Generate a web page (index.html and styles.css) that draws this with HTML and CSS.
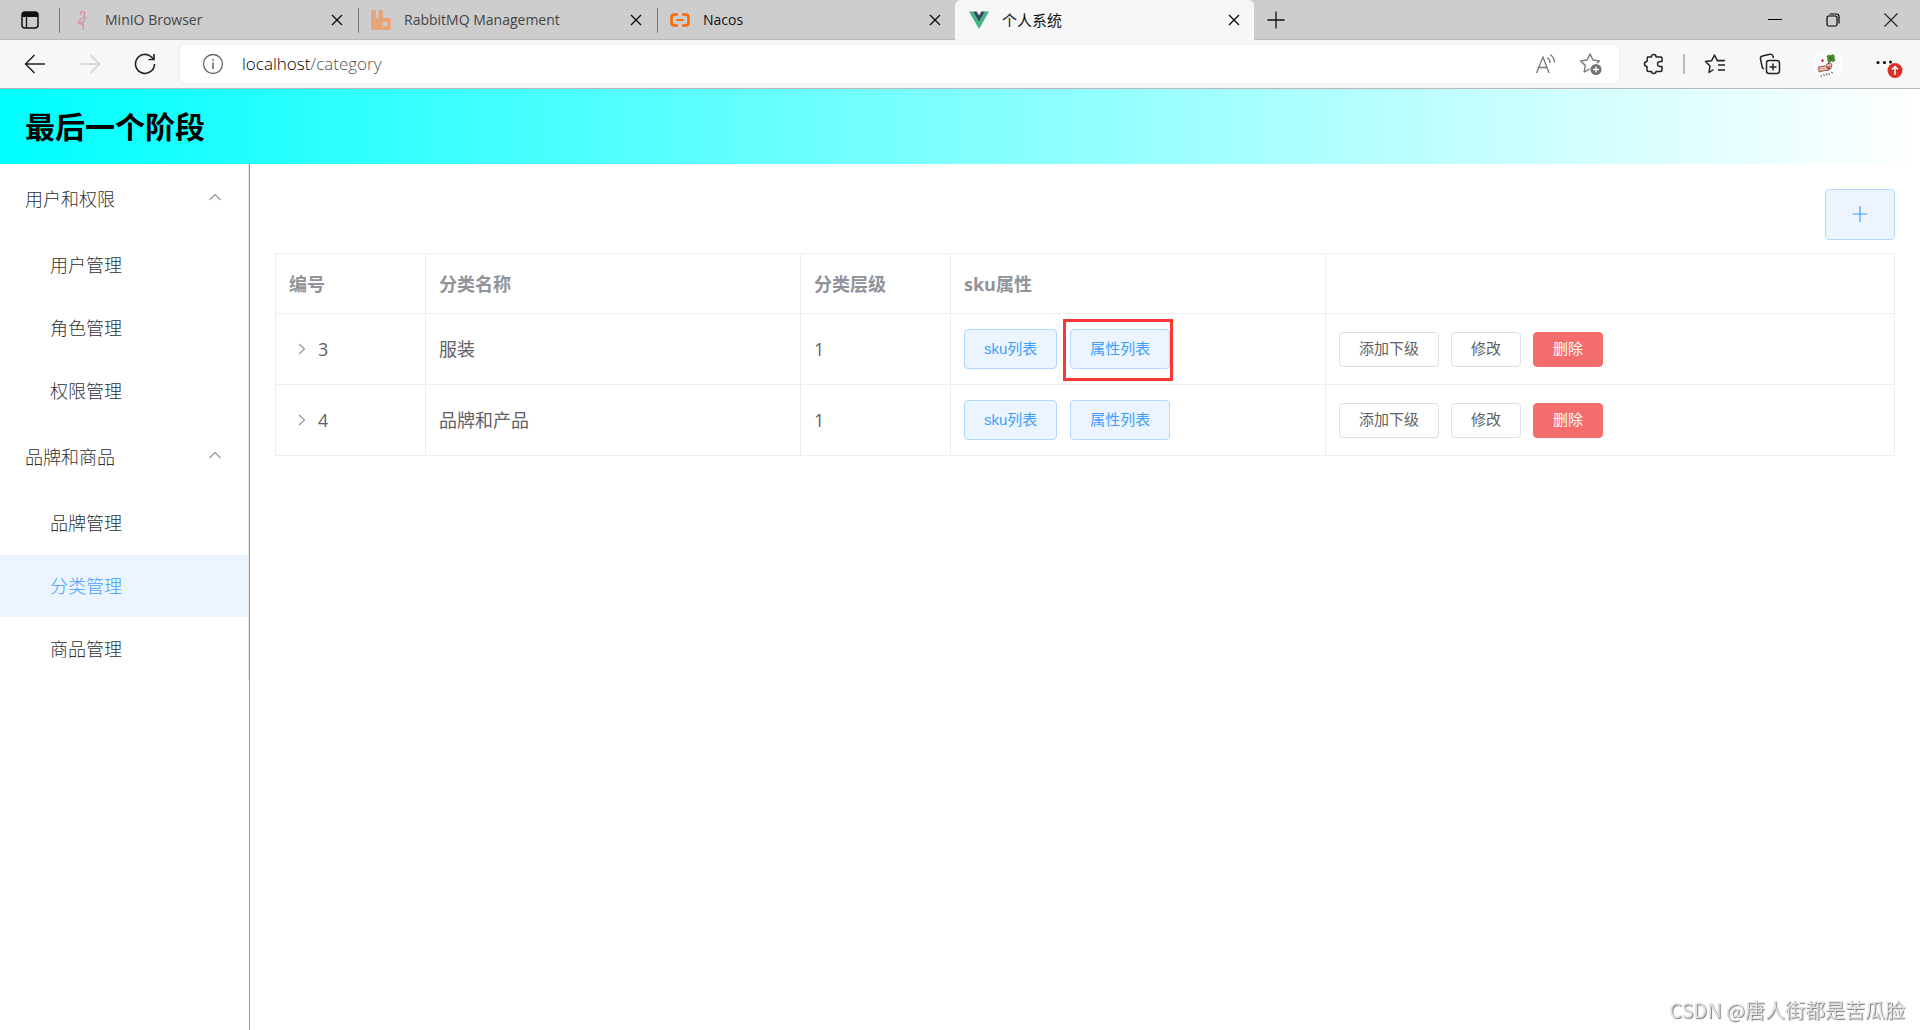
FILE: index.html
```html
<!DOCTYPE html>
<html lang="zh-CN">
<head>
<meta charset="utf-8">
<title>个人系统</title>
<link rel="stylesheet" href="styles.css">
</head>
<body>
<div class="browser">
  <div class="tabstrip">
    <button class="tab-actions" aria-label="Tab actions">
      <svg width="20" height="20" viewBox="0 0 20 20"><rect x="2" y="2" width="16" height="16" rx="3" fill="none" stroke="#111" stroke-width="1.5"/><path d="M2 7V4.500Q2 2 4.500 2h11Q18 2 18 4.500V7Z" fill="#111"/><path d="M6.500 6v12" stroke="#111" stroke-width="1.300"/></svg>
    </button>
    <div class="tab">
      <svg class="favicon" width="20" height="20" viewBox="0 0 20 20" fill="none" stroke="#d58f9b" stroke-width="1.300" stroke-linecap="round" stroke-linejoin="round"><path d="M9 4.500Q8.500 1.300 10.500 1.300Q13 1.500 12.500 4Q12 5.500 13 7.500Q13.500 10 11 12L6 13.500Q7 9.500 12.500 7M11 12v7.500M11 15l-3-1.500"/></svg>
      <span class="tab-title">MinIO Browser</span>
      <button class="tab-close" aria-label="Close tab"><svg width="12" height="12" viewBox="0 0 12 12"><path d="M1 1l10 10M11 1L1 11"/></svg></button>
    </div>
    <div class="tab">
      <svg class="favicon" width="20" height="20" viewBox="0 0 20 20"><path fill="#e6a57b" d="M1 0h3q1 0 1 1v7h2.500V1q0-1 1-1h2.500q1 0 1 1v7h7q1 0 1 1v10q0 1-1 1H1q-1 0-1-1V1q0-1 1-1z"/><rect x="12" y="12" width="4" height="4" rx="1" fill="#cdcdcd"/></svg>
      <span class="tab-title">RabbitMQ Management</span>
      <button class="tab-close" aria-label="Close tab"><svg width="12" height="12" viewBox="0 0 12 12"><path d="M1 1l10 10M11 1L1 11"/></svg></button>
    </div>
    <div class="tab">
      <svg class="favicon" width="20" height="20" viewBox="0 0 20 20" fill="none" stroke="#ff6a00" stroke-width="2.600"><path d="M8 4.500H4.500Q1.500 4.500 1.500 7.500v5q0 3 3 3H8M12 4.500h3.500q3 0 3 3v5q0 3-3 3H12"/><path d="M6.500 10h7" stroke-width="2"/></svg>
      <span class="tab-title dark">Nacos</span>
      <button class="tab-close" aria-label="Close tab"><svg width="12" height="12" viewBox="0 0 12 12"><path d="M1 1l10 10M11 1L1 11"/></svg></button>
    </div>
    <div class="tab active">
      <svg class="favicon" width="20" height="20" viewBox="0 0 20 20"><path fill="#41b883" d="M0 1.500h4L10 12l6-10.500h4L10 19z"/><path fill="#35495e" d="M4 1.500h3.700L10 5.500l2.300-4H16L10 12z"/></svg>
      <span class="tab-title dark">个人系统</span>
      <button class="tab-close" aria-label="Close tab"><svg width="12" height="12" viewBox="0 0 12 12"><path d="M1 1l10 10M11 1L1 11"/></svg></button>
    </div>
    <button class="new-tab" aria-label="New tab"><svg width="18" height="18" viewBox="0 0 18 18"><path d="M9 0.500v17M0.500 9h17" stroke="#111" stroke-width="1.300"/></svg></button>
    <div class="window-controls">
      <button aria-label="Minimize"><svg width="14" height="14" viewBox="0 0 14 14"><path d="M0 6.500h14" stroke="#000"/></svg></button>
      <button aria-label="Restore"><svg width="14" height="14" viewBox="0 0 14 14" fill="none" stroke="#000" stroke-width="1.200"><rect x="1" y="3" width="10" height="10" rx="1.500"/><path d="M3.500 1H10.500Q13 1 13 3.500V10.500"/></svg></button>
      <button aria-label="Close"><svg width="14" height="14" viewBox="0 0 14 14"><path d="M0.500 0.500l13 13M13.500 0.500l-13 13" stroke="#222" stroke-width="1.100"/></svg></button>
    </div>
  </div>
  <div class="toolbar">
    <div class="nav-buttons">
      <button aria-label="Back"><svg width="22" height="22" viewBox="0 0 22 22"><path d="M21 11H1.500M10.500 2L1.500 11l9 9" fill="none" stroke="#222" stroke-width="1.500"/></svg></button>
      <button aria-label="Forward" disabled><svg width="22" height="22" viewBox="0 0 22 22"><path d="M1 11h19.500M11.500 2l9 9-9 9" fill="none" stroke="#cfcfcf" stroke-width="1.500"/></svg></button>
      <button aria-label="Reload"><svg width="22" height="22" viewBox="0 0 22 22" fill="none" stroke="#222" stroke-width="1.600"><path d="M20.500 11A9.500 9.500 0 1 1 17.500 4L19.500 6"/><path d="M20 1v5.500h-5.500"/></svg></button>
    </div>
    <div class="address">
      <svg width="22" height="22" viewBox="0 0 22 22" fill="none" stroke="#666" stroke-width="1.300"><circle cx="11" cy="11" r="9.500"/><path d="M11 9.500v6.500M11 6v1.700" stroke-width="1.600"/></svg>
      <div class="url"><span class="host">localhost</span>/category</div>
      <button aria-label="Read aloud"><svg width="22" height="22" viewBox="0 0 22 22" fill="none" stroke="#777" stroke-width="1.300"><path d="M1.500 20L8 4l6 16M4 14.500h8M12.500 4.500q2.500 2 2.500 5.500M15 1.500q4.500 3 4.500 8"/></svg></button>
      <button aria-label="Add to favorites"><svg width="24" height="24" viewBox="0 0 24 24"><path d="M11 2l2.900 6 6.400.900-4.600 4.600 1 6.300L11 16.900 5.200 20l1.100-6.500L1.700 8.900 8.100 8z" fill="none" stroke="#777" stroke-width="1.400" stroke-linejoin="round"/><circle cx="17" cy="17.500" r="6.500" fill="#fff"/><circle cx="17" cy="17.500" r="5.500" fill="#717171"/><path d="M17 14.500v6M14 17.500h6" stroke="#fff" stroke-width="1.300"/></svg></button>
    </div>
    <div class="extras">
      <button aria-label="Extensions"><svg width="22" height="22" viewBox="0 0 22 22" fill="none" stroke="#222" stroke-width="1.500" stroke-linejoin="round"><path d="M4.500 4H8.500Q8.200 1.500 10.700 1.500T13 4H18Q19 4 19 5V8.500Q14.500 8 14.500 11T19 13.500V17Q19 18.500 17.500 18.500H13Q13 20.500 10.800 20.500T8.500 18.500H5.500Q4 18.500 4 17V13.500Q1.500 13.500 1.500 11T4 8.500Z"/></svg></button>
      <span class="divider"></span>
      <button aria-label="Favorites"><svg width="22" height="22" viewBox="0 0 22 22" fill="none" stroke="#222" stroke-width="1.500" stroke-linejoin="round"><path d="M9.500 16.500L5 19.500l1-6.500L1.500 8.500 7.700 7.700 10.500 2l2.800 5.700H20M14 12h7M14 17h7M12.500 7.500h8.500"/></svg></button>
      <button aria-label="Collections"><svg width="22" height="22" viewBox="0 0 22 22" fill="none" stroke="#222" stroke-width="1.500"><rect x="7.500" y="7.500" width="13" height="13" rx="2.500"/><path d="M14 10.500v7M10.500 14h7M5 16L3.300 14.500 1.500 6Q1 3.500 3.500 3L11 1.300Q13.500 1 14 3.300L14.500 5"/></svg></button>
      <button aria-label="Profile"><svg width="28" height="28" viewBox="0 0 28 28"><circle cx="14" cy="14" r="13.500" fill="#fafafa" stroke="#fff"/><path d="M4.500 17l6.500-1 3-2.500q3-1 4 1l-1 4q-3 3-6 2l-6 1.500z" fill="#edb4a5" stroke="#76443d" stroke-width=".8"/><path d="M12 17h4M13 19l3-1M14 14l3-6" stroke="#6a3d2c" fill="none"/><g fill="#479b20" stroke="#285f19" stroke-width=".7"><circle cx="15" cy="7" r="1.800"/><circle cx="18.500" cy="6.500" r="1.800"/><circle cx="15.500" cy="10" r="1.800"/><circle cx="19" cy="9.700" r="1.800"/></g><path d="M7 10.500l1.500-1.500 1.500 1.500-1.500 2z" fill="#c71d4d"/><path d="M7 25l.500 1.500M9 24.500l2 1M12 23.500l1 2M14 23.500l2 1M17 22l2 1" stroke="#665451" fill="none"/></svg></button>
      <button class="more" aria-label="Settings and more"><svg width="28" height="28" viewBox="0 0 28 28"><g fill="#111"><circle cx="3" cy="12.500" r="1.600"/><circle cx="9.500" cy="12.500" r="1.600"/><circle cx="15.500" cy="12" r="1.500"/></g><circle cx="20" cy="20.500" r="7.500" fill="#db3226"/><path d="M20 25v-8M17 19.500l3-3 3 3" stroke="#fff" stroke-width="1.500" fill="none"/></svg></button>
    </div>
  </div>
</div>
<header class="app-header"><h1>最后一个阶段</h1></header>
<div class="layout">
  <nav class="sidebar">
    <div class="menu">
      <button class="menu-head" aria-expanded="true">用户和权限<svg width="14" height="12" viewBox="0 0 14 12"><path d="M1.500 7L7 1.500 12.500 7"/></svg></button>
      <div class="submenu">
        <a href="#user">用户管理</a>
        <a href="#role">角色管理</a>
        <a href="#permission">权限管理</a>
      </div>
      <button class="menu-head" aria-expanded="true">品牌和商品<svg width="14" height="12" viewBox="0 0 14 12"><path d="M1.500 7L7 1.500 12.500 7"/></svg></button>
      <div class="submenu">
        <a href="#brand">品牌管理</a>
        <a class="current" href="#category">分类管理</a>
        <a href="#product">商品管理</a>
      </div>
    </div>
  </nav>
  <main class="content">
    <button class="btn primary add" aria-label="添加分类"><svg width="16" height="18" viewBox="0 0 16 18"><path d="M8 0v16M0.500 8h15" stroke="#409eff" stroke-width="1.200"/></svg></button>
    <table>
      <colgroup><col class="narrow"><col class="wide"><col class="narrow"><col class="wide"><col></colgroup>
      <thead><tr><th>编号</th><th>分类名称</th><th>分类层级</th><th>sku属性</th><th></th></tr></thead>
      <tbody>
        <tr>
          <td><div class="expand"><svg width="8" height="12" viewBox="0 0 8 12"><path d="M1 1l5.500 5L1 11"/></svg>3</div></td>
          <td>服装</td><td>1</td>
          <td><div class="actions"><button class="btn primary">sku列表</button><span class="marked"><button class="btn primary">属性列表</button></span></div></td>
          <td><div class="actions tight"><button class="btn small">添加下级</button><button class="btn small">修改</button><button class="btn small danger">删除</button></div></td>
        </tr>
        <tr>
          <td><div class="expand"><svg width="8" height="12" viewBox="0 0 8 12"><path d="M1 1l5.500 5L1 11"/></svg>4</div></td>
          <td>品牌和产品</td><td>1</td>
          <td><div class="actions"><button class="btn primary">sku列表</button><button class="btn primary">属性列表</button></div></td>
          <td><div class="actions tight"><button class="btn small">添加下级</button><button class="btn small">修改</button><button class="btn small danger">删除</button></div></td>
        </tr>
      </tbody>
    </table>
  </main>
</div>
<div class="watermark">CSDN @唐人街都是苦瓜脸</div>
</body>
</html>
```

FILE: styles.css
```css
* { box-sizing: border-box; }
body {
  margin: 0;
  min-height: 100vh;
  display: flex;
  flex-direction: column;
  background: #fff;
  color: #303133;
  font: 300 18px/24px "Open Sans", "Noto Sans CJK SC", sans-serif;
}
button { border: 0; padding: 0; margin: 0; background: none; font: inherit; color: inherit; }
svg { display: block; flex: none; }
a { color: inherit; text-decoration: none; }

.tabstrip {
  display: flex;
  height: 40px;
  background: #cdcdcd;
  box-shadow: inset 0 -1px #bababa;
}
.tab-actions { width: 58px; padding-left: 2px; display: flex; align-items: center; justify-content: center; }
.tab {
  flex: 0 1 299px;
  min-width: 0;
  display: flex;
  align-items: center;
  gap: 13px;
  padding: 0 14px;
  background: linear-gradient(#777, #777) 1px 50% / 1px 25px no-repeat;
  font-size: 14px;
  font-weight: 400;
  color: #444;
}
.tab.active {
  background: #f7f7f7;
  border-radius: 6px 6px 0 0;
  font-size: 15px;
}
.tab-title { flex: 1; white-space: nowrap; overflow: hidden; }
.dark { color: #111; }
.tab-close path { stroke: #111; stroke-width: 1.4; }
.new-tab { padding: 0 13px; }
.window-controls { display: flex; margin-left: auto; }
.window-controls button { width: 58px; display: flex; align-items: center; justify-content: center; }

.toolbar {
  display: flex;
  align-items: center;
  height: 49px;
  padding: 0 17px 0 24px;
  background: #f7f7f7;
  border-bottom: 1px solid #b8b8b8;
}
.nav-buttons { display: flex; gap: 33px; width: 156px; }
.address {
  flex: 1;
  display: flex;
  align-items: center;
  height: 38px;
  padding: 0 16px 0 22px;
  background: #fff;
  border-radius: 5px;
  box-shadow: 0 0 3px #e4e4e4;
}
.url { flex: 1; padding-left: 18px; font-size: 17px; color: #555; }
.host { color: #000; }
.address button + button { margin-left: 22px; }
.extras { display: flex; align-items: center; padding-left: 24px; }
.divider { width: 2px; height: 20px; margin: 0 19px 0 18px; background: #bbb; }
.extras button + button { margin-left: 33px; }

.app-header {
  display: flex;
  align-items: center;
  height: 75px;
  padding: 0 25px;
  background: linear-gradient(to right, #0ff, #fff);
  color: #000;
}
.app-header h1 { margin: 0; font-size: 30px; line-height: 40px; }

.layout { flex: 1; display: flex; }
.sidebar { flex: none; width: 250px; border-right: 1px solid #999; }
.menu { border-right: 1px solid #e6e6e6; }
.menu-head {
  width: 100%;
  height: 70px;
  padding: 0 26px 0 25px;
  display: flex;
  align-items: center;
  justify-content: space-between;
}
.menu-head path, .expand path { fill: none; stroke: #909399; stroke-width: 1.1; }
.submenu { display: grid; gap: 1px; }
.submenu a { height: 62px; padding-left: 50px; line-height: 62px; }
.submenu .current { color: #409eff; background: #ecf5ff; }

.content { flex: 1; min-width: 0; padding: 25px; display: flex; flex-direction: column; gap: 13px; }
.btn {
  height: 40px;
  padding: 0 19px;
  border: 1px solid #dcdfe6;
  border-radius: 4px;
  background: #fff;
  color: #606266;
  font: 400 15px/20px "Liberation Sans", "Noto Sans CJK SC", sans-serif;
  white-space: nowrap;
}
.btn.primary { color: #409eff; background: #ecf5ff; border-color: #b3d8ff; }
.btn.small { height: 35px; }
.btn.danger { color: #fff; background: #f56c6c; border-color: #f56c6c; }
.btn.add { align-self: flex-end; width: 70px; height: 51px; display: flex; align-items: center; justify-content: center; }

table {
  width: 100%;
  table-layout: fixed;
  border-collapse: separate;
  border-spacing: 0;
  border: solid #ebeef5;
  border-width: 1px 0 0 1px;
  color: #606266;
  font-weight: 400;
}
.narrow { width: 150px; }
.wide { width: 375px; }
th, td { padding: 0 13px; border: solid #ebeef5; border-width: 0 1px 1px 0; text-align: left; }
th { height: 60px; color: #909399; font-weight: 700; }
td { height: 71px; }
.expand { display: flex; align-items: center; gap: 12px; padding-left: 9px; }
.actions { display: flex; align-items: center; gap: 13px; }
.actions.tight { gap: 12px; }
.marked { position: relative; display: flex; }
.marked::after {
  content: "";
  position: absolute;
  inset: -10px -3px -12px -7px;
  border: 3px solid #fc3636;
  pointer-events: none;
}
.watermark {
  position: fixed;
  right: 15px;
  bottom: 8px;
  font: 400 20px/24px "Noto Sans CJK SC", sans-serif;
  color: #e2e2e2;
  text-shadow: 1px 1px 1px #777;
}
```
